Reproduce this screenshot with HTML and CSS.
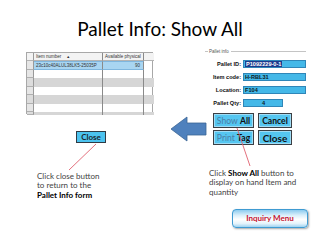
FILE: index.html
```html
<!DOCTYPE html>
<html>
<head>
<meta charset="utf-8">
<link rel="stylesheet" href="styles.css">
</head>
<body>
<div class="slide">
  <h1 class="title">Pallet Info: Show All</h1>
  <div class="stage">
    <div class="col-left">
      <div class="grid">
        <div class="c sel hd"></div><div class="c hd h1">Item number<span class="sort">▲</span></div><div class="c hd h2">Available physical</div><div class="c hd"></div>
        <div class="c sel"></div><div class="c pick">23c10c40ALUL38LK5-25035P</div><div class="c pick num">90</div><div class="c"></div>
        <div class="c sel"></div><div class="c"></div><div class="c"></div><div class="c"></div>
        <div class="c sel g"></div><div class="c g"></div><div class="c g"></div><div class="c g"></div>
        <div class="c sel"></div><div class="c"></div><div class="c"></div><div class="c"></div>
        <div class="c sel g"></div><div class="c g"></div><div class="c g"></div><div class="c g"></div>
        <div class="c sel"></div><div class="c"></div><div class="c"></div><div class="c"></div>
        <div class="c sel g"></div><div class="c g"></div><div class="c g"></div><div class="c g"></div>
      </div>
      <div class="btn btn-close">Close</div>
      <p class="note note-left">Click close button<br>to return to the<br><b>Pallet Info form</b></p>
    </div>
    <div class="col-mid">
      <svg class="arrow" width="37" height="26" viewBox="0 0 37 26">
        <polygon points="1,13 17,1 17,7 36,7 36,19 17,19 17,25" fill="#4f81bd" stroke="#3a6594" stroke-width="0.8"/>
      </svg>
    </div>
    <div class="col-right">
      <div class="group">
        <div class="legend"><span>Pallet info</span></div>
        <div class="frow"><span class="lbl">Pallet ID:</span><span class="field"><span class="hl">P1092229-0-1</span></span></div>
        <div class="frow"><span class="lbl">Item code:</span><span class="field">H-RBL31</span></div>
        <div class="frow"><span class="lbl">Location:</span><span class="field">F104</span></div>
        <div class="frow"><span class="lbl">Pallet Qty:</span><span class="field qty">4</span></div>
      </div>
      <div class="btns">
        <div class="fbtn"><span class="lt">Show</span>&nbsp;<b>All</b></div>
        <div class="fbtn"><b>Cancel</b></div>
        <div class="fbtn"><span class="lt">Print</span>&nbsp;<b>Tag</b></div>
        <div class="fbtn big"><b>Close</b></div>
      </div>
      <p class="note note-right">Click <b>Show All</b> button to<br>display on hand Item and<br>quantity</p>
      <div class="inquiry">Inquiry Menu</div>
    </div>
  </div>
  <svg class="connectors" width="320" height="240" viewBox="0 0 320 240">
    <line x1="96" y1="144" x2="69" y2="170" stroke="#e0606e" stroke-width="0.9"/>
    <line x1="237" y1="128" x2="250" y2="166" stroke="#e0606e" stroke-width="0.9"/>
  </svg>
</div>
</body>
</html>
```

FILE: styles.css
```css
* { box-sizing: border-box; }
html, body { margin: 0; padding: 0; background: #fff; }
.slide {
  position: relative;
  width: 320px;
  height: 240px;
  overflow: hidden;
  background: #fff;
  font-family: Lato, "Open Sans", sans-serif;
}
.title {
  margin: 0;
  height: 52px;
  padding-top: 17px;
  font-size: 19px;
  line-height: 24px;
  font-weight: 400;
  text-align: center;
  color: #000;
}
.stage {
  display: flex;
  padding-left: 26px;
  height: 188px;
}
.col-left { width: 127px; display: flex; flex-direction: column; }
.col-mid { width: 52px; }
.col-right { width: 115px; display: flex; flex-direction: column; }

/* data grid picture */
.grid {
  display: grid;
  grid-template-columns: 7px 69px 41px 10px;
  grid-template-rows: 8px 9px 8px 9px 8px 9px 8px 3px;
  height: 62px;
  border: 1px solid #a8a8a8;
  border-bottom: none;
  background: #fff;
  font-family: "Liberation Sans", sans-serif;
  font-size: 4.5px;
  color: #333;
}
.c { border-right: 1px solid #8a8a8a; overflow: hidden; white-space: nowrap; }
.c:nth-child(4n) { border-right: none; }
.c.g { background: #d6d6d6; }
.c.sel { background: #e6e6e6; border-bottom: 1px solid #b0b0b0; border-right: 1px solid #9a9a9a; }
.c.sel.g { background: #dcdcdc; }
.c.hd { background: #f3f3f3; border-bottom: 1px solid #b4b4b4; line-height: 7px; padding-left: 2px; }
.c.hd.sel { padding-left: 0; }
.sort { margin-left: 5px; font-size: 4px; }
.h2 { padding-left: 2px; }
.c.pick { background: #a9d5f1; line-height: 8px; padding-left: 2px; border-top: 1px solid #7fb6de; border-bottom: 1px solid #7fb6de; }
.c.pick.num { text-align: right; padding-right: 3px; }

.btn-close {
  margin-top: 17px;
  margin-left: 50px;
  width: 30px;
  height: 12px;
  background: #4cc3ef;
  border: 1px solid #2f3a44;
  font-size: 8px;
  line-height: 10px;
  font-weight: 700;
  text-align: center;
  color: #1b2630;
}

.note {
  margin: 0;
  font-size: 8px;
  line-height: 9.4px;
  color: #3f3f3f;
  white-space: nowrap;
}
.note b { color: #000; }
.note-left { margin-top: 29px; margin-left: 11px; }
.note-right { margin-top: 24px; margin-left: 4px; line-height: 9.3px; }

.arrow { display: block; margin-top: 64px; margin-left: 17px; }

/* pallet info form picture */
.group { width: 101px; margin-top: -3px; font-family: "Liberation Sans", sans-serif; }
.legend {
  display: flex;
  align-items: center;
  height: 5px;
  font-size: 4.5px;
  color: #555;
}
.legend::before { content: ""; width: 3px; height: 1px; background: #c4c4c4; margin-right: 1px; }
.legend::after { content: ""; flex: 1; height: 1px; background: #c4c4c4; margin-left: 2px; }
.frow {
  display: flex;
  align-items: center;
  height: 8px;
  margin-top: 5px;
}
.legend + .frow { margin-top: 6px; }
.lbl {
  width: 37px;
  padding-right: 1px;
  text-align: right;
  font-size: 5.6px;
  font-weight: 700;
  color: #111;
  white-space: nowrap;
}
.field {
  width: 63px;
  height: 8px;
  margin-left: 1px;
  background: #44b8e8;
  border: 1px solid #2f86b8;
  font-size: 5.6px;
  font-weight: 700;
  line-height: 6px;
  padding-left: 1px;
  color: #0d1a24;
  white-space: nowrap;
}
.field.qty { width: 40px; text-align: center; }
.hl { background: #1d3a8c; color: #fff; padding: 0 1px; }

.btns {
  display: grid;
  grid-template-columns: 41px 34px;
  grid-template-rows: 15px 15px;
  column-gap: 4px;
  row-gap: 2px;
  margin-top: 6px;
  margin-left: 8px;
}
.fbtn {
  display: flex;
  align-items: center;
  justify-content: center;
  background: #55c6f0;
  border: 1px solid #3b3f44;
  box-shadow: inset 0 0 0 1px #9fdcf5;
  font-size: 8.6px;
  color: #111;
  white-space: nowrap;
}
.fbtn .lt { color: #4b7ea6; }
.fbtn.big { font-size: 10px; }

.inquiry {
  margin-top: 12px;
  margin-left: 27px;
  width: 76px;
  height: 19px;
  border: 1px solid #3f9bd2;
  border-radius: 4px;
  background: linear-gradient(#8ccbef 0%, #d8eefa 30%, #ffffff 55%, #e4f3fb 80%, #9ed3f1 100%);
  box-shadow: 1px 1px 2px rgba(0,0,0,0.35);
  font-size: 8px;
  font-weight: 700;
  color: #c41230;
  text-align: center;
  line-height: 17px;
}

.connectors { position: absolute; left: 0; top: 0; pointer-events: none; }
```
